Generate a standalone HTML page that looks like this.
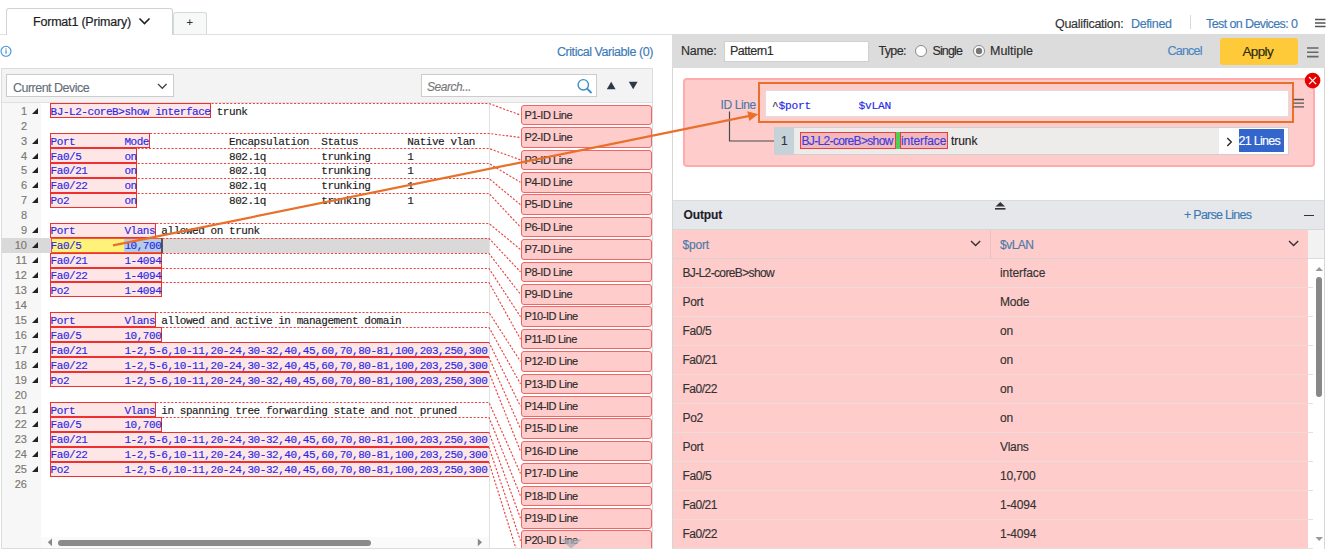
<!DOCTYPE html><html><head><meta charset="utf-8"><style>
*{margin:0;padding:0;box-sizing:border-box}
html,body{width:1331px;height:553px;overflow:hidden;background:#fff;position:relative}
body{font-family:"Liberation Sans",sans-serif;color:#222;-webkit-text-stroke-width:0.15px}
.a{position:absolute;white-space:pre}
.mono{font-family:"Liberation Mono",monospace}
.code{position:absolute;left:0;white-space:pre;font-family:"Liberation Mono",monospace;font-size:11px;letter-spacing:-0.45px;line-height:15px;color:#1a1a1a}
.bx{position:absolute;background:#ffe6e6;border:1px solid #ee3030}
.lbl{position:absolute;left:521px;width:130.5px;height:20.6px;background:#ffcccc;border:1px solid #ee6666;border-radius:3px;font-size:11px;color:#2a2a2a;padding-left:2.5px;line-height:19px;letter-spacing:-0.44px}
.ln{position:absolute;left:0;width:27px;text-align:right;font-size:11px;color:#7d7770}
.tri{position:absolute;left:31.5px;width:0;height:0;border-left:6px solid transparent;border-bottom:6px solid #222}
.orow{position:absolute;left:673px;width:635px;height:29px;background:#ffcccc;border-bottom:1px solid #ecd8d8}
.otx{position:absolute;font-size:12px;color:#333;top:8px;letter-spacing:-0.1px}
.blue{color:#3d7ab5}
</style></head><body><div class="a" style="left:5.5px;top:8px;width:167.5px;height:27px;border:1px solid #cfd3d7;border-bottom:none;border-radius:3px 3px 0 0;background:#fff;z-index:2"></div><div class="a" style="left:33px;top:15px;font-size:12.5px;color:#1e1e1e;z-index:3;letter-spacing:-0.2px;-webkit-text-stroke:0.2px #1e1e1e">Format1 (Primary)</div><svg class="a" style="left:138px;top:17px;z-index:3" width="13" height="9"><path d="M1.5 1.5 L6.5 6.5 L11.5 1.5" fill="none" stroke="#222" stroke-width="1.6"/></svg><div class="a" style="left:173px;top:12px;width:34px;height:23px;border:1px solid #d5d9dc;border-bottom:none;border-radius:3px 3px 0 0;background:#f7f8f8;z-index:1"></div><div class="a" style="left:186.5px;top:16px;font-size:11px;color:#333;z-index:3">+</div><div class="a" style="left:0;top:34px;width:672px;height:1px;background:#dde0e3;z-index:1"></div><div class="a" style="left:1055px;top:17px;font-size:12.5px;color:#333;letter-spacing:-0.28px">Qualification:</div><div class="a blue" style="left:1131px;top:17px;font-size:12.5px;letter-spacing:-0.36px">Defined</div><div class="a" style="left:1190px;top:15px;width:1px;height:14px;background:#d8d8d8"></div><div class="a blue" style="left:1206px;top:17px;font-size:12.5px;letter-spacing:-0.6px">Test on Devices: 0</div><svg class="a" style="left:1315px;top:18px" width="11" height="10"><path d="M0 1.5H10.5M0 5H10.5M0 8.5H10.5" stroke="#555" stroke-width="1.4"/></svg><svg class="a" style="left:0;top:45px" width="13" height="13"><circle cx="6" cy="6.3" r="5" fill="none" stroke="#3a8fd6" stroke-width="1.1"/><rect x="5.4" y="5.2" width="1.2" height="3.6" fill="#3a8fd6"/><rect x="5.4" y="3.4" width="1.2" height="1.1" fill="#3a8fd6"/></svg><div class="a blue" style="left:557px;top:45px;font-size:12.5px;letter-spacing:-0.45px">Critical Variable (0)</div><div class="a" style="left:1px;top:68px;width:652px;height:481px;border:1px solid #dcdcdc;background:#fff"></div><div class="a" style="left:2px;top:69px;width:650px;height:33.5px;background:#f3f3f3;border-bottom:1px solid #e0e0e0"></div><div class="a" style="left:6px;top:74px;width:168px;height:23px;background:#fff;border:1px solid #cccccc"></div><div class="a" style="left:13px;top:80.6px;font-size:12.5px;color:#66707a;letter-spacing:-0.52px">Current Device</div><svg class="a" style="left:157px;top:83px" width="11" height="7"><path d="M1 1 L5.3 5.3 L9.6 1" fill="none" stroke="#444" stroke-width="1.3"/></svg><div class="a" style="left:421px;top:74px;width:176px;height:23px;background:#fff;border:1px solid #cccccc"></div><div class="a" style="left:427px;top:79.5px;font-size:12px;font-style:italic;color:#777;letter-spacing:-0.45px">Search...</div><svg class="a" style="left:576px;top:78px" width="18" height="16"><circle cx="7.3" cy="6.8" r="5.2" fill="none" stroke="#3a8fc8" stroke-width="1.4"/><path d="M11 10.5 L15.5 15" stroke="#3a8fc8" stroke-width="1.8"/></svg><svg class="a" style="left:606px;top:81px" width="11" height="9"><path d="M0.8 8.3 L5.2 0.8 L9.6 8.3Z" fill="#2c3a47"/></svg><svg class="a" style="left:628px;top:81px" width="11" height="9"><path d="M0.8 0.8 L5.2 8.3 L9.6 0.8Z" fill="#2c3a47"/></svg><div class="a" style="left:2px;top:103px;width:39px;height:445px;background:#f7f7f7"></div><div class="a" style="left:2px;top:237.66px;width:487px;height:14.94px;background:#d9d9d9"></div><div class="a" style="left:489px;top:103px;width:1px;height:445px;background:#e2e2e2"></div><div class="a" style="left:41px;top:537px;width:448px;height:11px;background:#fafafa"></div><div class="a" style="left:57.5px;top:539.5px;width:313px;height:6.5px;background:#8a8a8a;border-radius:3.5px"></div><svg class="a" style="left:47px;top:538px" width="6" height="9"><path d="M5 0.5 L0.8 4.3 L5 8.2Z" fill="#888"/></svg><svg class="a" style="left:477px;top:538px" width="6" height="9"><path d="M0.8 0.5 L5 4.3 L0.8 8.2Z" fill="#888"/></svg><div class="a" style="left:0;top:0;width:489px;height:537px;overflow:hidden"><div class="ln" style="top:103.70px;line-height:15px">1</div><div class="tri" style="top:107.70px"></div><div class="bx" style="left:50.2px;top:103.20px;width:161.10px;height:14.94px"></div><div class="code" style="left:50.60px;top:104.70px;width:438.40px;overflow:hidden"><span style="color:#2828e6">BJ-L2-coreB&gt;show interface</span> trunk</div><div class="ln" style="top:118.64px;line-height:15px">2</div><div class="ln" style="top:133.58px;line-height:15px">3</div><div class="tri" style="top:137.58px"></div><div class="bx" style="left:50.2px;top:133.08px;width:99.60px;height:14.94px"></div><div class="code" style="left:50.60px;top:134.58px;width:438.40px;overflow:hidden"><span style="color:#2828e6">Port        Mode</span>             Encapsulation  Status        Native vlan</div><div class="ln" style="top:148.52px;line-height:15px">4</div><div class="tri" style="top:152.52px"></div><div class="bx" style="left:50.2px;top:148.02px;width:87.30px;height:14.94px"></div><div class="code" style="left:50.60px;top:149.52px;width:438.40px;overflow:hidden"><span style="color:#2828e6">Fa0/5       on</span>               802.1q         trunking      1</div><div class="ln" style="top:163.46px;line-height:15px">5</div><div class="tri" style="top:167.46px"></div><div class="bx" style="left:50.2px;top:162.96px;width:87.30px;height:14.94px"></div><div class="code" style="left:50.60px;top:164.46px;width:438.40px;overflow:hidden"><span style="color:#2828e6">Fa0/21      on</span>               802.1q         trunking      1</div><div class="ln" style="top:178.40px;line-height:15px">6</div><div class="tri" style="top:182.40px"></div><div class="bx" style="left:50.2px;top:177.90px;width:87.30px;height:14.94px"></div><div class="code" style="left:50.60px;top:179.40px;width:438.40px;overflow:hidden"><span style="color:#2828e6">Fa0/22      on</span>               802.1q         trunking      1</div><div class="ln" style="top:193.34px;line-height:15px">7</div><div class="tri" style="top:197.34px"></div><div class="bx" style="left:50.2px;top:192.84px;width:87.30px;height:14.94px"></div><div class="code" style="left:50.60px;top:194.34px;width:438.40px;overflow:hidden"><span style="color:#2828e6">Po2         on</span>               802.1q         trunking      1</div><div class="ln" style="top:208.28px;line-height:15px">8</div><div class="ln" style="top:223.22px;line-height:15px">9</div><div class="tri" style="top:227.22px"></div><div class="bx" style="left:50.2px;top:222.72px;width:105.75px;height:14.94px"></div><div class="code" style="left:50.60px;top:224.22px;width:438.40px;overflow:hidden"><span style="color:#2828e6">Port        Vlans</span> allowed on trunk</div><div class="ln" style="top:238.16px;line-height:15px">10</div><div class="tri" style="top:242.16px"></div><div class="a" style="left:50.5px;top:237.66px;width:73.80px;height:15.44px;background:#fff27a;border-top:1px solid #f05a28;border-left:1px solid #f05a28;border-bottom:1px solid #f05a28"></div><div class="a" style="left:124.40px;top:237.66px;width:36.90px;height:15.44px;background:#b5cbe8;border-top:1px solid #f05a28;border-bottom:1px solid #f05a28"></div><div class="a" style="left:161.30px;top:237.66px;width:2px;height:14.94px;background:#555"></div><div class="code" style="left:50.60px;top:239.16px;width:438.40px;overflow:hidden"><span style="color:#2828e6">Fa0/5       10,700</span></div><div class="ln" style="top:253.10px;line-height:15px">11</div><div class="tri" style="top:257.10px"></div><div class="bx" style="left:50.2px;top:252.60px;width:111.90px;height:14.94px"></div><div class="code" style="left:50.60px;top:254.10px;width:438.40px;overflow:hidden"><span style="color:#2828e6">Fa0/21      1-4094</span></div><div class="ln" style="top:268.04px;line-height:15px">12</div><div class="tri" style="top:272.04px"></div><div class="bx" style="left:50.2px;top:267.54px;width:111.90px;height:14.94px"></div><div class="code" style="left:50.60px;top:269.04px;width:438.40px;overflow:hidden"><span style="color:#2828e6">Fa0/22      1-4094</span></div><div class="ln" style="top:282.98px;line-height:15px">13</div><div class="tri" style="top:286.98px"></div><div class="bx" style="left:50.2px;top:282.48px;width:111.90px;height:14.94px"></div><div class="code" style="left:50.60px;top:283.98px;width:438.40px;overflow:hidden"><span style="color:#2828e6">Po2         1-4094</span></div><div class="ln" style="top:297.92px;line-height:15px">14</div><div class="ln" style="top:312.86px;line-height:15px">15</div><div class="tri" style="top:316.86px"></div><div class="bx" style="left:50.2px;top:312.36px;width:105.75px;height:14.94px"></div><div class="code" style="left:50.60px;top:313.86px;width:438.40px;overflow:hidden"><span style="color:#2828e6">Port        Vlans</span> allowed and active in management domain</div><div class="ln" style="top:327.80px;line-height:15px">16</div><div class="tri" style="top:331.80px"></div><div class="bx" style="left:50.2px;top:327.30px;width:111.90px;height:14.94px"></div><div class="code" style="left:50.60px;top:328.80px;width:438.40px;overflow:hidden"><span style="color:#2828e6">Fa0/5       10,700</span></div><div class="ln" style="top:342.74px;line-height:15px">17</div><div class="tri" style="top:346.74px"></div><div class="bx" style="left:50.2px;top:342.24px;width:444.60px;height:14.94px"></div><div class="code" style="left:50.60px;top:343.74px;width:438.40px;overflow:hidden"><span style="color:#2828e6">Fa0/21      1-2,5-6,10-11,20-24,30-32,40,45,60,70,80-81,100,203,250,300</span></div><div class="ln" style="top:357.68px;line-height:15px">18</div><div class="tri" style="top:361.68px"></div><div class="bx" style="left:50.2px;top:357.18px;width:444.60px;height:14.94px"></div><div class="code" style="left:50.60px;top:358.68px;width:438.40px;overflow:hidden"><span style="color:#2828e6">Fa0/22      1-2,5-6,10-11,20-24,30-32,40,45,60,70,80-81,100,203,250,300</span></div><div class="ln" style="top:372.62px;line-height:15px">19</div><div class="tri" style="top:376.62px"></div><div class="bx" style="left:50.2px;top:372.12px;width:444.60px;height:14.94px"></div><div class="code" style="left:50.60px;top:373.62px;width:438.40px;overflow:hidden"><span style="color:#2828e6">Po2         1-2,5-6,10-11,20-24,30-32,40,45,60,70,80-81,100,203,250,300</span></div><div class="ln" style="top:387.56px;line-height:15px">20</div><div class="ln" style="top:402.50px;line-height:15px">21</div><div class="tri" style="top:406.50px"></div><div class="bx" style="left:50.2px;top:402.00px;width:105.75px;height:14.94px"></div><div class="code" style="left:50.60px;top:403.50px;width:438.40px;overflow:hidden"><span style="color:#2828e6">Port        Vlans</span> in spanning tree forwarding state and not pruned</div><div class="ln" style="top:417.44px;line-height:15px">22</div><div class="tri" style="top:421.44px"></div><div class="bx" style="left:50.2px;top:416.94px;width:111.90px;height:14.94px"></div><div class="code" style="left:50.60px;top:418.44px;width:438.40px;overflow:hidden"><span style="color:#2828e6">Fa0/5       10,700</span></div><div class="ln" style="top:432.38px;line-height:15px">23</div><div class="tri" style="top:436.38px"></div><div class="bx" style="left:50.2px;top:431.88px;width:444.60px;height:14.94px"></div><div class="code" style="left:50.60px;top:433.38px;width:438.40px;overflow:hidden"><span style="color:#2828e6">Fa0/21      1-2,5-6,10-11,20-24,30-32,40,45,60,70,80-81,100,203,250,300</span></div><div class="ln" style="top:447.32px;line-height:15px">24</div><div class="tri" style="top:451.32px"></div><div class="bx" style="left:50.2px;top:446.82px;width:444.60px;height:14.94px"></div><div class="code" style="left:50.60px;top:448.32px;width:438.40px;overflow:hidden"><span style="color:#2828e6">Fa0/22      1-2,5-6,10-11,20-24,30-32,40,45,60,70,80-81,100,203,250,300</span></div><div class="ln" style="top:462.26px;line-height:15px">25</div><div class="tri" style="top:466.26px"></div><div class="bx" style="left:50.2px;top:461.76px;width:444.60px;height:14.94px"></div><div class="code" style="left:50.60px;top:463.26px;width:438.40px;overflow:hidden"><span style="color:#2828e6">Po2         1-2,5-6,10-11,20-24,30-32,40,45,60,70,80-81,100,203,250,300</span></div><div class="ln" style="top:477.20px;line-height:15px">26</div></div><svg class="a" style="left:0;top:0" width="660" height="548"><path d="M211.5 103.5 H489.0 L520.5 115.1 M150.0 133.5 H489.0 L520.5 137.5 M137.7 148.5 H489.0 L520.5 159.9 M137.7 163.5 H489.0 L520.5 182.3 M137.7 178.5 H489.0 L520.5 204.7 M137.7 193.5 H489.0 L520.5 227.1 M156.2 223.5 H489.0 L520.5 249.5 M162.3 238.5 H489.0 L520.5 271.9 M162.3 253.5 H489.0 L520.5 294.3 M162.3 268.5 H489.0 L520.5 316.7 M162.3 282.5 H489.0 L520.5 339.1 M156.2 312.5 H489.0 L520.5 361.5 M162.3 327.5 H489.0 L520.5 383.9 M488.3 342.5 H489.0 L520.5 406.3 M488.3 357.5 H489.0 L520.5 428.7 M488.3 372.5 H489.0 L520.5 451.1 M156.2 402.5 H489.0 L520.5 473.5 M162.3 417.5 H489.0 L520.5 495.9 M488.3 432.5 H489.0 L520.5 518.3 M488.3 447.5 H489.0 L520.5 540.7 M488.3 462.5 H489.0 L520.5 563.1" fill="none" stroke="#e84545" stroke-width="1.15" stroke-dasharray="2.15 1.6"/></svg><div class="lbl" style="top:104.80px">P1-ID Line</div><div class="lbl" style="top:127.20px">P2-ID Line</div><div class="lbl" style="top:149.60px">P3-ID Line</div><div class="lbl" style="top:172.00px">P4-ID Line</div><div class="lbl" style="top:194.40px">P5-ID Line</div><div class="lbl" style="top:216.80px">P6-ID Line</div><div class="lbl" style="top:239.20px">P7-ID Line</div><div class="lbl" style="top:261.60px">P8-ID Line</div><div class="lbl" style="top:284.00px">P9-ID Line</div><div class="lbl" style="top:306.40px">P10-ID Line</div><div class="lbl" style="top:328.80px">P11-ID Line</div><div class="lbl" style="top:351.20px">P12-ID Line</div><div class="lbl" style="top:373.60px">P13-ID Line</div><div class="lbl" style="top:396.00px">P14-ID Line</div><div class="lbl" style="top:418.40px">P15-ID Line</div><div class="lbl" style="top:440.80px">P16-ID Line</div><div class="lbl" style="top:463.20px">P17-ID Line</div><div class="lbl" style="top:485.60px">P18-ID Line</div><div class="lbl" style="top:508.00px">P19-ID Line</div><div class="lbl" style="top:530.40px">P20-ID Line</div><div class="a" style="left:0;top:548px;width:672px;height:5px;background:#fff"></div><div class="a" style="left:1px;top:548px;width:652px;height:1px;background:#dcdcdc"></div><svg class="a" style="left:560px;top:539px" width="23" height="10"><path d="M1 0.5 L22 0.5 L11 9.5Z" fill="#a8adb8" fill-opacity="0.75"/></svg><!--RIGHT--><div class="a" style="left:672px;top:34px;width:653px;height:515px;border-left:1px solid #d6d6d6;border-right:1px solid #d6d6d6;border-bottom:1px solid #d6d6d6;background:#fff"></div>
<div class="a" style="left:672px;top:34px;width:653px;height:34px;background:#dcdcdc"></div>
<div class="a" style="left:681px;top:44px;font-size:12.5px;color:#2e2e2e;letter-spacing:-0.26px">Name:</div>
<div class="a" style="left:724px;top:41px;width:145px;height:20.5px;background:#fff;border:1px solid #d0d0d0"></div>
<div class="a" style="left:730px;top:44px;font-size:12.5px;color:#2e2e2e;letter-spacing:-0.5px">Pattern1</div>
<div class="a" style="left:878.5px;top:44px;font-size:12.5px;color:#2e2e2e;letter-spacing:-0.67px">Type:</div>
<svg class="a" style="left:914px;top:44px" width="14" height="14"><circle cx="7" cy="7" r="5.5" fill="#fff" stroke="#8a8a8a" stroke-width="1"/></svg>
<div class="a" style="left:932.5px;top:44px;font-size:12.5px;color:#2e2e2e;letter-spacing:-0.88px">Single</div>
<svg class="a" style="left:971.5px;top:44px" width="14" height="14"><circle cx="7" cy="7" r="5.5" fill="#fff" stroke="#8a8a8a" stroke-width="1"/><circle cx="7" cy="7" r="3.2" fill="#777"/></svg>
<div class="a" style="left:990px;top:44px;font-size:12.5px;color:#2e2e2e;letter-spacing:-0.02px">Multiple</div>
<div class="a blue" style="left:1167.5px;top:44px;font-size:12.5px;letter-spacing:-0.77px;color:#4a86c0">Cancel</div>
<div class="a" style="left:1220px;top:38px;width:78px;height:27px;background:#ffca3a;border-radius:3px"></div>
<div class="a" style="left:1242.5px;top:43.5px;font-size:13.5px;color:#2a2a10;letter-spacing:-0.65px">Apply</div>
<svg class="a" style="left:1307px;top:47px" width="12" height="12"><path d="M0 1H11.5M0 5.3H11.5M0 9.6H11.5" stroke="#666" stroke-width="1.6"/></svg>

<!-- pattern box -->
<div class="a" style="left:683px;top:78px;width:632px;height:88.5px;background:#ffcccc;border:2px solid #ffabab;border-radius:4px"></div>
<div class="a" style="left:720.5px;top:97.5px;font-size:12px;color:#4a7aa8;letter-spacing:-0.39px">ID Line</div>
<div class="a" style="left:758px;top:82px;width:536px;height:41px;border:2px solid #e8702a"></div>
<div class="a" style="left:764.5px;top:90px;width:524px;height:27px;background:#fff;border:1px solid #e4dcdc"></div>
<div class="a mono" style="left:772px;top:99.5px;font-size:11.2px;color:#2828e6;letter-spacing:-0.24px"><span style="color:#333">^</span>$port</div><div class="a mono" style="left:858.5px;top:99.5px;font-size:11.2px;color:#2828e6;letter-spacing:-0.24px">$vLAN</div>
<svg class="a" style="left:1293px;top:98px" width="12" height="11"><path d="M0.5 1.5H11M0.5 5.2H11M0.5 8.9H11" stroke="#555" stroke-width="1.3"/></svg>
<svg class="a" style="left:1304px;top:72px" width="18" height="18"><circle cx="8.6" cy="8.6" r="7.8" fill="#e60000"/><path d="M5.1 5.1L12.1 12.1M12.1 5.1L5.1 12.1" stroke="#fff" stroke-width="1.3"/></svg>
<svg class="a" style="left:0;top:0" width="800" height="170"><path d="M729.5 111.5 V141 H774" fill="none" stroke="#4a4a4a" stroke-width="1.2"/></svg>
<!-- line row -->
<div class="a" style="left:774px;top:127px;width:514.5px;height:28px;background:#eeebeb;border:1px solid #cfcfcf"></div>
<div class="a" style="left:775px;top:128px;width:19px;height:26px;background:#c6d2da"></div>
<div class="a" style="left:781px;top:133.5px;font-size:12px;color:#333">1</div>
<div class="a" style="left:800px;top:132px;width:96px;height:17px;background:#f2b8bc;border:1px solid #e84040"></div>
<div class="a" style="left:896.3px;top:132px;width:3.3px;height:17px;background:#50d050"></div>
<div class="a" style="left:900.3px;top:132px;width:47.5px;height:17px;background:#f2b8bc;border:1px solid #e84040"></div>
<div class="a" style="left:801.5px;top:134px;font-size:12px;color:#3b3be0;letter-spacing:-0.66px">BJ-L2-coreB&gt;show</div>
<div class="a" style="left:901px;top:134px;font-size:12px;color:#3b3be0;letter-spacing:-0.09px">interface</div>
<div class="a" style="left:951px;top:134px;font-size:12px;color:#222;letter-spacing:-0.07px">trunk</div>
<div class="a" style="left:1219px;top:128px;width:68.5px;height:26px;background:#fff"></div>
<svg class="a" style="left:1225.5px;top:136.5px" width="8" height="11"><path d="M1.3 1 L5.3 5 L1.3 9" fill="none" stroke="#222" stroke-width="1.3"/></svg>
<div class="a" style="left:1238.5px;top:128.5px;width:45.5px;height:23.5px;background:#3366cc"></div>
<div class="a" style="left:1238.5px;top:133.5px;font-size:12.5px;color:#fff;letter-spacing:-0.72px">21 Lines</div>

<!-- output header -->
<div class="a" style="left:673px;top:200px;width:651px;height:29.5px;background:#e6e7ea;border-top:1px solid #dadcdf;border-bottom:1px solid #d5d7da"></div>
<div class="a" style="left:683.5px;top:208px;font-size:12px;font-weight:bold;color:#1e1e2a;letter-spacing:-0.1px">Output</div>
<svg class="a" style="left:994px;top:201px" width="13" height="10"><path d="M1.5 5.5 L6.3 1 L11 5.5Z" fill="#333"/><rect x="1" y="7" width="10.5" height="1.6" fill="#333"/></svg>
<div class="a blue" style="left:1184px;top:208px;font-size:12.5px;letter-spacing:-0.74px">+ Parse Lines</div>
<div class="a" style="left:1303.5px;top:215px;width:10px;height:1.2px;background:#333"></div>
<!-- column header -->
<div class="a" style="left:673px;top:230px;width:635px;height:29px;background:#ffcccc;border-bottom:1px solid #dcd0d0"></div>
<div class="a" style="left:990px;top:230px;width:1px;height:29px;background:#ecc0c0"></div>
<div class="a" style="left:1308px;top:230px;width:16px;height:29px;background:#f2f2f2;border-bottom:1px solid #ddd"></div>
<div class="a blue" style="left:682.5px;top:237.5px;font-size:12px;color:#4a7aa8;letter-spacing:-0.2px">$port</div>
<div class="a blue" style="left:1000px;top:237.5px;font-size:12px;color:#4a7aa8;letter-spacing:-0.5px">$vLAN</div>
<svg class="a" style="left:970px;top:240px" width="12" height="8"><path d="M1 1 L5.6 5.6 L10.2 1" fill="none" stroke="#333" stroke-width="1.4"/></svg>
<svg class="a" style="left:1288px;top:240px" width="12" height="8"><path d="M1 1 L5.6 5.6 L10.2 1" fill="none" stroke="#333" stroke-width="1.4"/></svg>
<div class="a" style="left:673px;top:259px;width:651px;height:290px;background:#fff"></div>
<div class="a" style="left:673px;top:259px;width:635px;height:289px;background:#ffcccc"></div>
<div class="a" style="left:682.5px;top:266.3px;font-size:12px;color:#333;letter-spacing:-0.64px">BJ-L2-coreB&gt;show</div>
<div class="a" style="left:1000px;top:266.3px;font-size:12px;color:#333;letter-spacing:-0.09px">interface</div>
<div class="a" style="left:673px;top:287px;width:640px;height:1px;background:#eddcdc"></div>
<div class="a" style="left:682.5px;top:295.3px;font-size:12px;color:#333;letter-spacing:-0.3px">Port</div>
<div class="a" style="left:1000px;top:295.3px;font-size:12px;color:#333;letter-spacing:-0.2px">Mode</div>
<div class="a" style="left:673px;top:316px;width:640px;height:1px;background:#eddcdc"></div>
<div class="a" style="left:682.5px;top:324.3px;font-size:12px;color:#333;letter-spacing:-0.4px">Fa0/5</div>
<div class="a" style="left:1000px;top:324.3px;font-size:12px;color:#333;letter-spacing:-0.1px">on</div>
<div class="a" style="left:673px;top:345px;width:640px;height:1px;background:#eddcdc"></div>
<div class="a" style="left:682.5px;top:353.3px;font-size:12px;color:#333;letter-spacing:-0.5px">Fa0/21</div>
<div class="a" style="left:1000px;top:353.3px;font-size:12px;color:#333;letter-spacing:-0.1px">on</div>
<div class="a" style="left:673px;top:374px;width:640px;height:1px;background:#eddcdc"></div>
<div class="a" style="left:682.5px;top:382.3px;font-size:12px;color:#333;letter-spacing:-0.5px">Fa0/22</div>
<div class="a" style="left:1000px;top:382.3px;font-size:12px;color:#333;letter-spacing:-0.1px">on</div>
<div class="a" style="left:673px;top:403px;width:640px;height:1px;background:#eddcdc"></div>
<div class="a" style="left:682.5px;top:411.3px;font-size:12px;color:#333;letter-spacing:-0.3px">Po2</div>
<div class="a" style="left:1000px;top:411.3px;font-size:12px;color:#333;letter-spacing:-0.1px">on</div>
<div class="a" style="left:673px;top:432px;width:640px;height:1px;background:#eddcdc"></div>
<div class="a" style="left:682.5px;top:440.3px;font-size:12px;color:#333;letter-spacing:-0.3px">Port</div>
<div class="a" style="left:1000px;top:440.3px;font-size:12px;color:#333;letter-spacing:-0.3px">Vlans</div>
<div class="a" style="left:673px;top:461px;width:640px;height:1px;background:#eddcdc"></div>
<div class="a" style="left:682.5px;top:469.3px;font-size:12px;color:#333;letter-spacing:-0.4px">Fa0/5</div>
<div class="a" style="left:1000px;top:469.3px;font-size:12px;color:#333;letter-spacing:-0.2px">10,700</div>
<div class="a" style="left:673px;top:490px;width:640px;height:1px;background:#eddcdc"></div>
<div class="a" style="left:682.5px;top:498.3px;font-size:12px;color:#333;letter-spacing:-0.5px">Fa0/21</div>
<div class="a" style="left:1000px;top:498.3px;font-size:12px;color:#333;letter-spacing:-0.2px">1-4094</div>
<div class="a" style="left:673px;top:519px;width:640px;height:1px;background:#eddcdc"></div>
<div class="a" style="left:682.5px;top:527.3px;font-size:12px;color:#333;letter-spacing:-0.5px">Fa0/22</div>
<div class="a" style="left:1000px;top:527.3px;font-size:12px;color:#333;letter-spacing:-0.2px">1-4094</div>
<div class="a" style="left:673px;top:548px;width:640px;height:1px;background:#eddcdc"></div>
<div class="a" style="left:1316px;top:276.5px;width:6px;height:120px;background:#888;border-radius:3px"></div>
<svg class="a" style="left:1315px;top:266px" width="9" height="6"><path d="M0.5 5 L4.2 1 L8 5Z" fill="#999"/></svg>
<svg class="a" style="left:1315px;top:536px" width="9" height="6"><path d="M0.5 1 L4.2 5 L8 1Z" fill="#999"/></svg>
<svg class="a" style="left:0;top:0;z-index:20" width="1331" height="553"><path d="M113 245.4 L749.5 115.9" stroke="#e8702a" stroke-width="2.2" fill="none"/><path d="M758.2 114.2 L747.3 111.3 L749.3 121.1Z" fill="#e8702a"/></svg>
</body></html>
